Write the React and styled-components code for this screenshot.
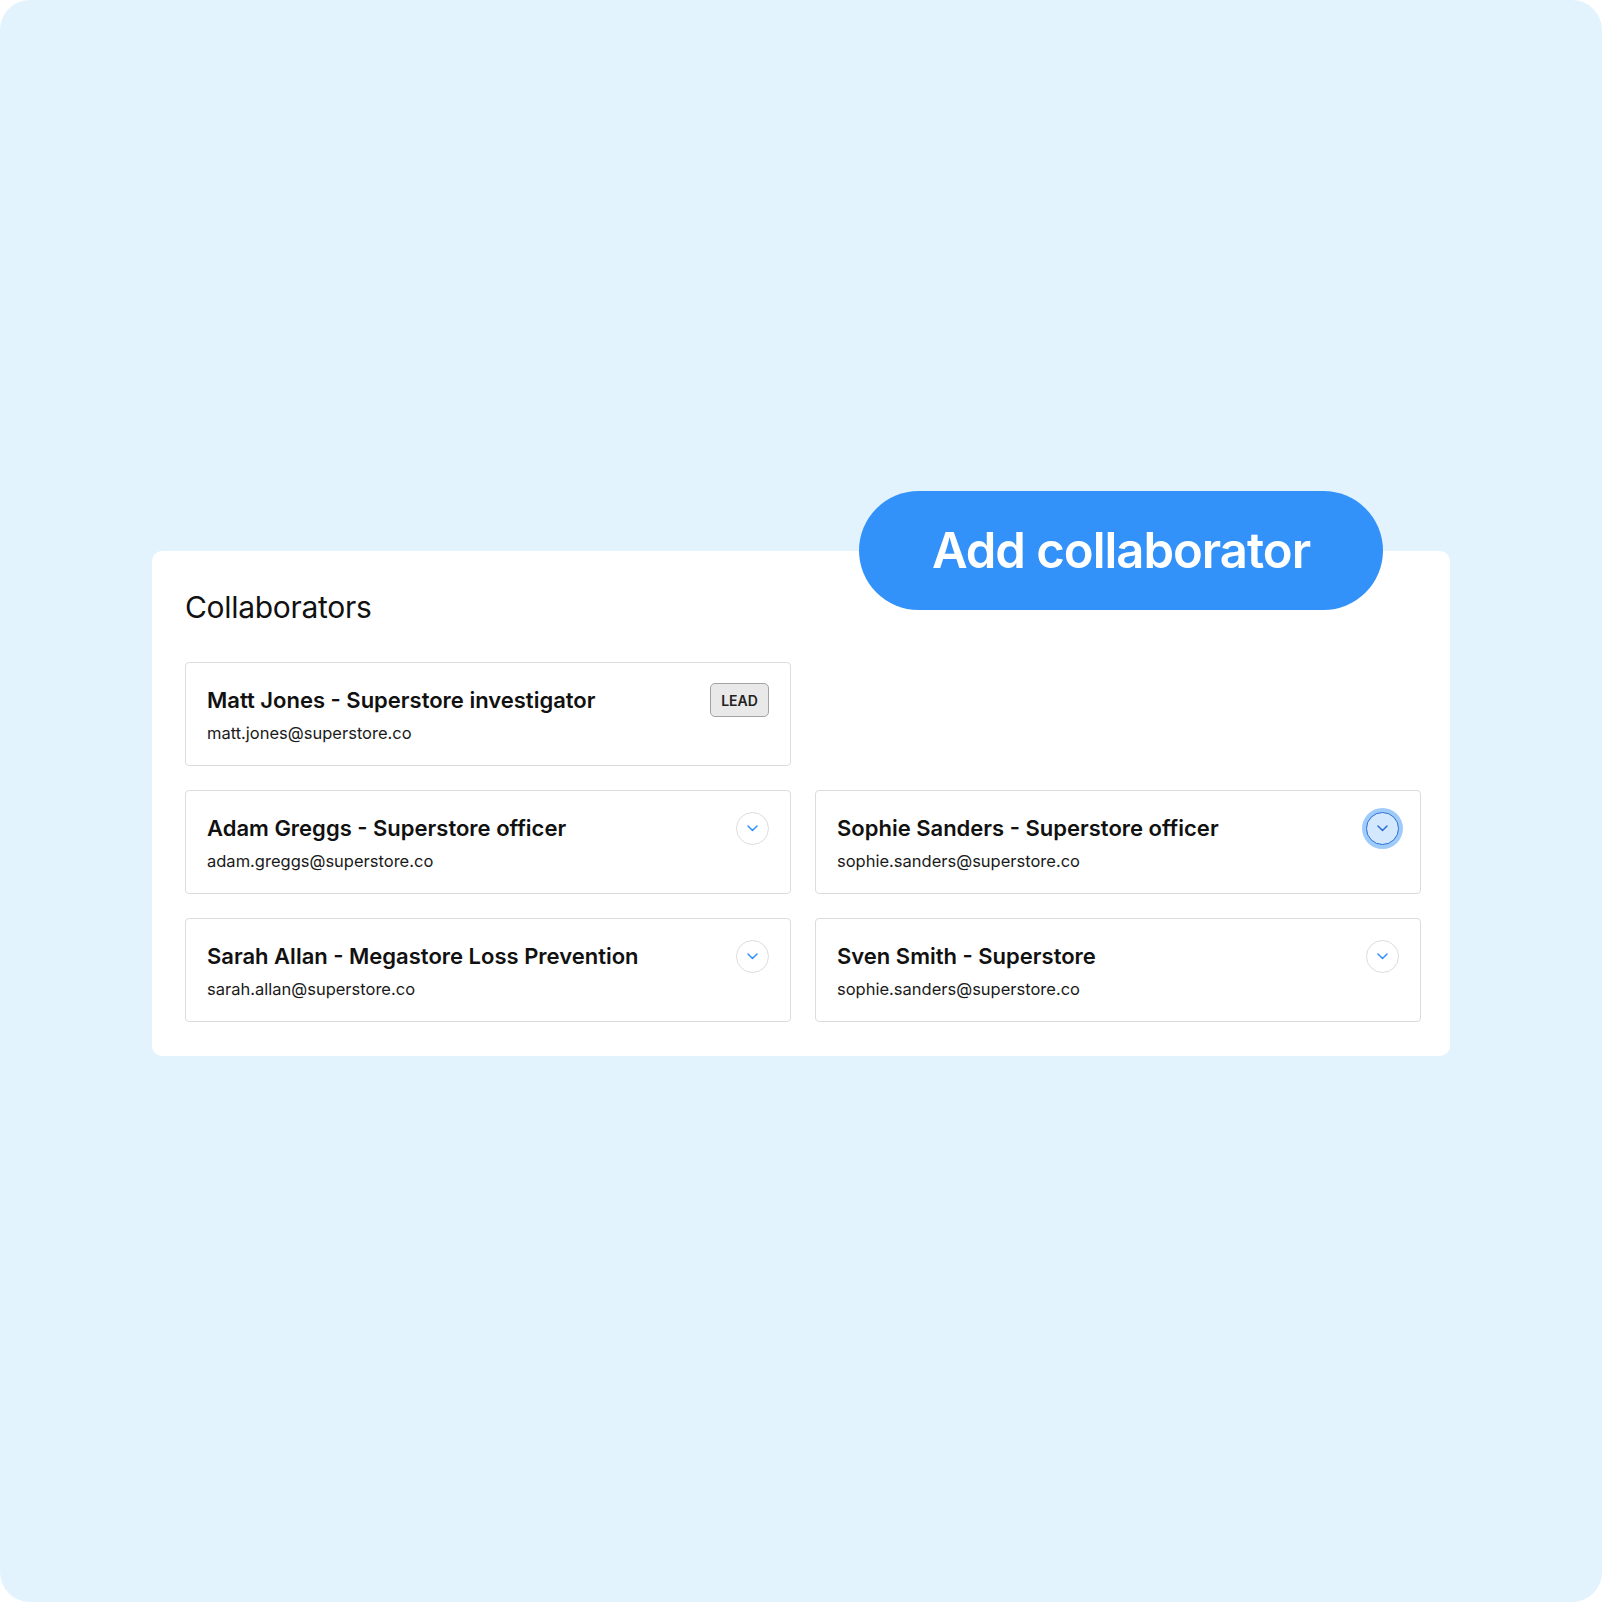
import React from 'react'
import styled, { createGlobalStyle } from 'styled-components'

const GlobalStyle = createGlobalStyle`
    html, body {
        margin: 0;
        padding: 0;
        background: #ffffff;
    }
    body {
        font-family: Inter, "Noto Sans", sans-serif;
        color: #111111;
    }
`

const Page = styled.div`
    width: 1602px;
    height: 1602px;
    background: #e3f3fe;
    border-radius: 30px;
    display: flex;
    justify-content: center;
    align-items: flex-start;
    padding-top: 551px;
    box-sizing: border-box;
`

const Panel = styled.section`
    position: relative;
    width: 1298px;
    box-sizing: border-box;
    background: #ffffff;
    border-radius: 10px;
    padding: 38px 29px 34px 33px;
`

const Title = styled.h2`
    margin: 0 0 37px;
    font-size: 30px;
    line-height: 36px;
    font-weight: 400;
    letter-spacing: -0.3px;
    color: #111111;
`

const AddButton = styled.button`
    position: absolute;
    left: 707px;
    top: -60px;
    width: 524px;
    height: 119px;
    border: none;
    border-radius: 60px;
    background: #3292f9;
    color: #ffffff;
    font-family: Inter, sans-serif;
    font-size: 49px;
    font-weight: 600;
    letter-spacing: -1px;
    cursor: pointer;
`

const Grid = styled.div`
    display: grid;
    grid-template-columns: 1fr 1fr;
    column-gap: 24px;
    row-gap: 24px;
`

const Card = styled.div`
    border: 1.5px solid #dcdcdc;
    border-radius: 4px;
    padding: 23px 21px 23px 21px;
    height: 104px;
    box-sizing: border-box;
`

const Header = styled.div`
    display: flex;
    justify-content: space-between;
    align-items: center;
    height: 28px;
`

const Name = styled.div`
    font-size: 22px;
    line-height: 28px;
    font-weight: 600;
    color: #111111;
    white-space: nowrap;
`

const Email = styled.div`
    margin-top: 9px;
    font-size: 16.5px;
    line-height: 20px;
    color: #1a1a1a;
`

const Badge = styled.span`
    display: inline-flex;
    align-items: center;
    justify-content: center;
    width: 59px;
    height: 34px;
    box-sizing: border-box;
    border: 1.5px solid #a3a3a3;
    border-radius: 5px;
    background: #e9e9e9;
    font-size: 14px;
    font-weight: 600;
    color: #222222;
`

const Toggle = styled.button`
    flex: none;
    width: 33px;
    height: 33px;
    padding: 0;
    border-radius: 50%;
    display: flex;
    align-items: center;
    justify-content: center;
    background: ${p => (p.$active ? '#d3e7fd' : '#ffffff')};
    border: 1.5px solid ${p => (p.$active ? '#2b6fd4' : '#dcdcdc')};
    box-shadow: ${p => (p.$active ? '0 0 0 4px #9ecbfa' : 'none')};
    color: ${p => (p.$active ? '#2b6fd4' : '#3292f9')};
    cursor: pointer;
`

const Chevron = () => (
    <svg width="11" height="7" viewBox="0 0 11 7" fill="none">
        <polyline points="1,1 5.5,5.5 10,1" stroke="currentColor" strokeWidth="1.5" strokeLinecap="round" strokeLinejoin="round" />
    </svg>
)

const people = [
    { name: 'Matt Jones - Superstore investigator', email: 'matt.jones@superstore.co', lead: true },
    null,
    { name: 'Adam Greggs - Superstore officer', email: 'adam.greggs@superstore.co' },
    { name: 'Sophie Sanders - Superstore officer', email: 'sophie.sanders@superstore.co', active: true },
    { name: 'Sarah Allan - Megastore Loss Prevention', email: 'sarah.allan@superstore.co' },
    { name: 'Sven Smith - Superstore', email: 'sophie.sanders@superstore.co' },
]

export default function App() {
    return (
        <>
            <GlobalStyle />
            <Page>
                <Panel>
                    <Title>Collaborators</Title>
                    <AddButton>Add collaborator</AddButton>
                    <Grid>
                        {people.map((p, index) => p ? (
                            <Card key={index}>
                                <Header>
                                    <Name>{p.name}</Name>
                                    {p.lead
                                        ? <Badge>LEAD</Badge>
                                        : <Toggle $active={p.active}><Chevron /></Toggle>}
                                </Header>
                                <Email>{p.email}</Email>
                            </Card>
                        ) : <div key={index} />)}
                    </Grid>
                </Panel>
            </Page>
        </>
    )
}
